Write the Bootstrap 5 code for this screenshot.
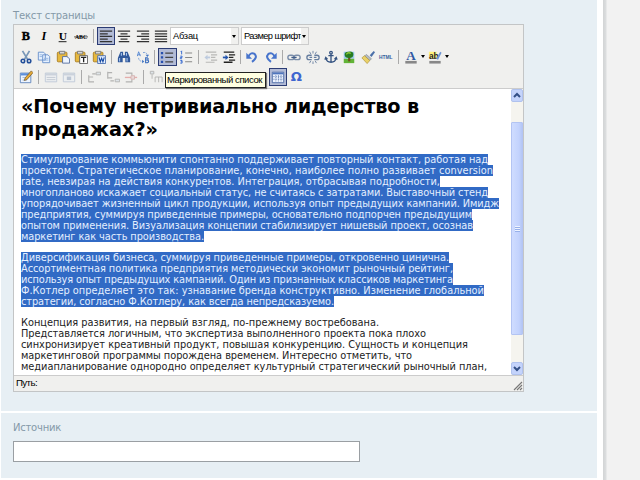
<!DOCTYPE html>
<html lang="ru">
<head>
<meta charset="utf-8">
<meta name="viewport" content="width=device-width, initial-scale=1">
<title>Текст страницы</title>
<link href="https://cdn.jsdelivr.net/npm/bootstrap@5.3.0/dist/css/bootstrap.min.css" rel="stylesheet">
<style>
body{width:640px;height:480px;overflow:hidden;background:#fff;font-family:"DejaVu Sans",Verdana,sans-serif;font-size:10px;color:#222}
.page-col{width:597px;padding-left:1px}
.panel-a{height:411px;background:#e7eff4;padding:9px 0 0 12px}
.panel-b{height:65px;margin-top:2px;background:#e7eff4;padding:8px 0 0 12px}
.cap{color:#8499a8;line-height:13px;height:15px}
.side{width:37px;margin-left:6px;background:linear-gradient(90deg,#d2d4d5 0,#dcdedf 3px,#f2f2f2 4px)}
.editor{width:511px;height:368px;border:1px solid #c3c5c6;background:#fff}
.tools{height:64px;background:#f0f0ee;border-bottom:1px solid #ccc;padding:1px 0 0 3px}
.trow{height:20.5px}
.tb{width:18.3px;height:18px;padding:0;border:1px solid transparent;border-radius:0;background:none;display:flex;align-items:center;justify-content:center;flex:none}
.tb svg{width:14px;height:14px;display:block;flex:none;overflow:visible}
.tb.on{background:#b2bbd6;border-color:#2b3c75}
.tb.dim{opacity:.32}
.sp{width:6.6px;height:14px;flex:none;background:linear-gradient(#aaa,#aaa) center/1px 100% no-repeat}
.sp.n{width:5.3px}
.pick{height:18px;border:1px solid #ccc;background:#fff;font:9.3px/16px "Liberation Sans",sans-serif;padding-left:2px;color:#000;width:69px;overflow:hidden;white-space:nowrap}
.pick+.pick{margin-left:2px;width:68px}
.pick i{width:7px;background:#f0f0ee;height:16px;flex:none}
.pick i:after,.arr:after{content:"";display:block;width:0;height:0;border:2px solid transparent;border-top:3px solid #000;border-bottom:0}
.pick i:after{margin:7px 0 0 1px}
.arr{width:6px;flex:none;padding-left:1px}
.tip{left:165px;top:72px;width:101px;height:16px;background:#ffffe1;border:1px solid #222;box-shadow:1px 1px 1px #777;font:9.5px/14px "Liberation Sans",sans-serif;padding-left:1px;color:#000;z-index:3;white-space:nowrap}
.doc{height:286px}
.copy{width:497px;padding:6px 0 0 7px;overflow:hidden}
.copy h1{font:bold 19.3px/23px "DejaVu Sans",sans-serif;color:#000;margin:0 0 12.5px;white-space:nowrap}
.copy p{font-size:9.8px;line-height:11.1px;margin:0 0 9.6px;white-space:nowrap;color:#222}
.fit{display:inline-block;vertical-align:top}
.copy p .fit{height:11.1px}
.picked .fit{background:#316ac5;color:#e4efff}
.scroll{width:12px;background:#f5f4ef}
.sb{height:13px;background:#c4d3fb;border:1px solid #b0c2ee;border-radius:2px}
.sb svg{width:10px;height:10px;display:block}
.thumb{height:213px;background:linear-gradient(90deg,#cfdcff,#c2d2fd 70%,#b4c6f5);border:1px solid #b3c4f3;border-radius:1px}
.grip{width:5px;height:6px;background:repeating-linear-gradient(#eef3ff 0 1px,#97b0ea 1px 2px)}
.status{height:16px;background:#f0f0ee;border-top:1px solid #ccc;font:9.7px/16px "Liberation Sans",sans-serif;padding-left:2px;color:#000}
.source{width:347px;height:21px;border:1px solid #9a9fa3;border-radius:0;background:#fff;padding:0;margin-top:5px}
.skip{margin-left:104px}
</style>
</head>
<body>
<svg width="0" height="0" class="position-absolute">
<defs>
<symbol id="al" viewBox="0 0 16 16"><path d="M1 2.500h14M1 5.500h9M1 8.500h14M1 11.500h9M1 14.500h14" stroke="#333" stroke-width="1.500"/></symbol>
<symbol id="ac" viewBox="0 0 16 16"><path d="M1 2.500h14M4 5.500h8M1 8.500h14M4 11.500h8M2 14.500h12" stroke="#333" stroke-width="1.500"/></symbol>
<symbol id="ar" viewBox="0 0 16 16"><path d="M1 2.500h14M6 5.500h9M1 8.500h14M6 11.500h9M1 14.500h14" stroke="#333" stroke-width="1.500"/></symbol>
<symbol id="aj" viewBox="0 0 16 16"><path d="M1 2.500h14M1 5.500h14M1 8.500h14M1 11.500h14M1 14.500h14" stroke="#333" stroke-width="1.500"/></symbol>
<symbol id="cut" viewBox="0 0 16 16"><path d="M4 1l6 10M12 1L6 11" stroke="#7897b8" stroke-width="2"/><g fill="none" stroke="#234f9a" stroke-width="1.800"><circle cx="4.500" cy="12.500" r="2"/><circle cx="11.500" cy="12.500" r="2"/></g></symbol>
<symbol id="cp" viewBox="0 0 16 16"><g fill="#e6f1ff" stroke="#628bc8"><path d="M1.500 2.500h6l2 2v7h-8zM6.500 5.500h6l2 2v7h-8z"/><path d="M3 5.500h3M3 7.500h3M8 9.500h5M8 11.500h5" stroke="#8fb2e0"/></g></symbol>
<symbol id="clip" viewBox="0 0 16 16"><rect x="1.500" y="2.500" width="11" height="11" rx="1" fill="#e7b93e" stroke="#a87b1f"/><path d="M4 1.500h6v3H4z" fill="#d8d8d8" stroke="#777"/></symbol>
<symbol id="ps" viewBox="0 0 16 16"><use href="#clip" width="16" height="16"/><path d="M7.500 7.500h5l3 2.500v5h-8z" fill="#eef5ff" stroke="#51699b"/></symbol>
<symbol id="pt" viewBox="0 0 16 16"><use href="#clip" width="16" height="16"/><path d="M6.500 6.500h9v9h-9z" fill="#fff" stroke="#555"/><path d="M8 8.500h6M11 8.500v5.500" stroke="#222" stroke-width="1.500"/></symbol>
<symbol id="pw" viewBox="0 0 16 16"><use href="#clip" width="16" height="16"/><path d="M6.500 6.500h9v9h-9z" fill="#e6f0ff" stroke="#4469ad"/><path d="M8 8.500l1.500 5 1.500-4 1.500 4 1.500-5" fill="none" stroke="#194ca5" stroke-width="1.300"/></symbol>
<symbol id="find" viewBox="0 0 16 16"><path d="M4 2h3v4h2V2h3l3 7v5H9.500V9h-3v5H1V9z" fill="#31599b"/><path d="M3 9v4M11.500 9v4M5 3.500v3M10.800 3.500v3" stroke="#aac9f3" stroke-width="1.200"/></symbol>
<symbol id="rep" viewBox="0 0 16 16"><path d="M3 2L1.500 7M3 2l2 5M2 5.500h3" fill="none" stroke="#4e82d0"/><path d="M11 9v5.500h2q3-1.500 0-3q2-1 0-2.500zM11 11.500h2" fill="none" stroke="#3569bb" stroke-width="1.200"/><path d="M8 3q4-1 5 3M3 9q0 4 5 4" fill="none" stroke="#6e97d4" stroke-dasharray="2 1"/><path d="M11 5.500h4l-2 2.500zM7 11v4l2.500-2z" fill="#4377c5"/></symbol>
<symbol id="ul" viewBox="0 0 16 16"><path d="M6 3.500h9M6 8.500h9M6 13.500h9" stroke="#444" stroke-width="1.300"/><path d="M1 2.200h2.600v2.600H1zM1 7.200h2.600v2.600H1zM1 12.200h2.600v2.600H1z" fill="#274fae"/></symbol>
<symbol id="ol" viewBox="0 0 16 16"><path d="M7 3.500h8M7 8.500h8M7 13.500h8" stroke="#888" stroke-width="1.200"/><path d="M2 2l1-1v4M1.500 7h2v1.500h-2V10h2M1.500 12h2v3h-2M2 13.500h1.500" fill="none" stroke="#396cd1" stroke-width="1.100"/></symbol>
<symbol id="ind" viewBox="0 0 16 16"><path d="M2 2.500h12M8 5.500h7M8 8.500h5M8 11.500h7M2 14h10" stroke="#222" stroke-width="1.500"/><path d="M1 8.500h4" stroke="#2355ae" stroke-width="2"/><path d="M4 5.500l3.500 3L4 11.500z" fill="#2355ae"/></symbol>
<symbol id="out" viewBox="0 0 16 16"><path d="M2 2.500h12M8 5.500h7M8 8.500h5M8 11.500h7M2 14h10" stroke="#444" stroke-width="1.300"/><path d="M3 8.500h4" stroke="#557fc0" stroke-width="2"/><path d="M4 5.500l-3.500 3L4 11.500z" fill="#557fc0"/></symbol>
<symbol id="undo" viewBox="0 0 16 16"><path d="M4 7q3-5 7-2.500q4 4-3 9" fill="none" stroke="#4774cc" stroke-width="2.300"/><path d="M1.500 3v7H8z" fill="#4774cc"/></symbol>
<symbol id="redo" viewBox="0 0 16 16"><path d="M12 7q-3-5-7-2.500q-4 4 3 9" fill="none" stroke="#4774cc" stroke-width="2.300"/><path d="M14.500 3v7H8z" fill="#4774cc"/></symbol>
<symbol id="lk" viewBox="0 0 16 16"><g fill="none" stroke="#7b8eaa" stroke-width="1.600"><rect x="1" y="6" width="7" height="5" rx="2.500"/><rect x="8" y="6" width="7" height="5" rx="2.500"/></g><path d="M5 8.500h6" stroke="#405d8a" stroke-width="1.500"/></symbol>
<symbol id="ulk" viewBox="0 0 16 16"><g fill="none" stroke="#657d9f" stroke-width="1.500"><path d="M6.500 6H3.500Q1 6 1 8.500T3.500 11h3M9.500 6h3Q15 6 15 8.500T12.500 11h-3M4 8.500h3M9 8.500h3"/><path d="M8 1v3M4 2l1.500 2.500M12 2l-1.500 2.500M8 13v3M4 15l1.500-2.500M12 15l-1.500-2.500" stroke-width="1"/></g></symbol>
<symbol id="anc" viewBox="0 0 16 16"><g fill="none" stroke="#365482" stroke-width="1.500"><circle cx="8" cy="3" r="1.500"/><path d="M8 4.500V14M5 6.500h6M2 9q1 5 6 5t6-5M1 11l1-2.500 2 2M15 11l-1-2.500-2 2"/></g></symbol>
<symbol id="img" viewBox="0 0 16 16"><path d="M2 2h12v8H2z" fill="#9bc9ef"/><path d="M2 10h12v5H2z" fill="#62b437"/><path d="M7 8h2.500v5H7z" fill="#71501d"/><path d="M3 5q0-3 4-3 6-1 6 3 0 4-5 4-5 0-5-4" fill="#277c20"/><path d="M5 5q2-3 5-1" stroke="#8bc737" stroke-width="1.500" fill="none"/></symbol>
<symbol id="br" viewBox="0 0 16 16"><path d="M10 6l4.500-5L16 2.500 12 8z" fill="#4b6fa8"/><path d="M6 5l6 5-2 2-6-5z" fill="#b2bbc4" stroke="#767b80" stroke-width=".6"/><path d="M4 6.500l6 5.500-3 3.500L1 9z" fill="#ead168" stroke="#a98e33" stroke-width=".7"/></symbol>
<symbol id="ed" viewBox="0 0 16 16"><path d="M1.500 3.500h12v11h-12z" fill="#eef5ff" stroke="#5a80b9"/><path d="M2 5h11" stroke="#5d8fdb" stroke-width="2.500"/><path d="M4 8.500h6M4 11.500h5" stroke="#9db5d7"/><path d="M6 12l1-3 7-8 2 2-7 8z" fill="#e8ac37" stroke="#725425" stroke-width=".8"/></symbol>
<symbol id="row" viewBox="0 0 16 16"><path d="M1.500 3.500h13v10h-13z" fill="#e5edf9" stroke="#5576a6"/><path d="M2 5h12" stroke="#8096b5" stroke-width="2.500"/><path d="M3 8.500h10M3 11h10" stroke="#5e7395"/></symbol>
<symbol id="cell" viewBox="0 0 16 16"><path d="M1.500 3.500h13v10h-13z" fill="#e5edf9" stroke="#5576a6"/><path d="M2 5h12" stroke="#8096b5" stroke-width="2.500"/><path d="M5.500 7.500h5v4h-5z" fill="#4d6c9c"/></symbol>
<symbol id="rb" viewBox="0 0 16 16"><path d="M2 6v8M2 8h5M2 13.500h6M6 4.500h4" fill="none" stroke="#333" stroke-width="1.300"/><path d="M10.500 2.500h5v3h-5z" fill="#bcd" stroke="#333"/></symbol>
<symbol id="ra" viewBox="0 0 16 16"><path d="M2 2v8M2 3h5M2 9h5M5 12.500h4" fill="none" stroke="#333" stroke-width="1.300"/><path d="M10.500 10.500h5v3h-5z" fill="#bcd" stroke="#333"/></symbol>
<symbol id="rd" viewBox="0 0 16 16"><path d="M2 3.500h7v3M2 13.500h7v-3" fill="none" stroke="#333" stroke-width="1.300"/><path d="M1 8.500h14" stroke="#c22" stroke-width="1.500"/><path d="M8 6.500h4v4H8z" fill="#daa" stroke="#933"/></symbol>
<symbol id="cb" viewBox="0 0 16 16"><path d="M1.500 1.500h4v3h-4zM3.500 5v5" fill="#bcd" stroke="#333"/><path d="M7 14V8h8v6M11 8v6" fill="none" stroke="#333"/></symbol>
<symbol id="grid" viewBox="0 0 16 16"><path d="M1.500 2.500h13v12h-13z" fill="#eef4ff" stroke="#4868a5"/><path d="M2 4h12" stroke="#4e75bd" stroke-width="2"/><path d="M2 7.500h12M2 10.500h12M5.500 6v8M8.500 6v8M11.500 6v8" stroke="#5876aa" stroke-dasharray="1 1"/></symbol>
</defs>
</svg>

<div class="d-flex h-100">
 <main class="page-col">
  <section class="panel-a">
   <div class="cap"><span class="fit" data-w="82">Текст страницы</span></div>
   <div class="editor">
    <div class="tools">
     <div class="trow d-flex align-items-center">
      <button class="tb"><svg viewBox="0 0 16 16"><text x="3" y="13" font-family="Liberation Serif" font-weight="bold" font-size="14" stroke="#000" stroke-width=".5">B</text></svg></button>
      <button class="tb"><svg viewBox="0 0 16 16"><text x="5" y="13" font-family="Liberation Serif" font-weight="bold" font-style="italic" font-size="14">I</text></svg></button>
      <button class="tb"><svg viewBox="0 0 16 16"><text x="3" y="12" font-family="Liberation Serif" font-weight="bold" font-size="13">U</text><path d="M3 14.500h9" stroke="#000"/></svg></button>
      <button class="tb"><svg viewBox="0 0 16 16"><text x="1" y="11.500" font-family="Liberation Serif" font-weight="bold" font-size="8" textLength="14" lengthAdjust="spacingAndGlyphs">ABC</text><path d="M0 9h16" stroke="#000" stroke-width=".7"/></svg></button>
      <span class="sp"></span>
      <button class="tb on"><svg><use href="#al"/></svg></button><button class="tb"><svg><use href="#ac"/></svg></button><button class="tb"><svg><use href="#ar"/></svg></button><button class="tb"><svg><use href="#aj"/></svg></button>
      <div class="pick d-flex justify-content-between"><span class="fit" data-w="25">Абзац</span><i></i></div>
      <div class="pick d-flex justify-content-between"><span class="fit" data-w="57">Размер шрифт</span><i></i></div>
     </div>
     <div class="trow d-flex align-items-center">
      <button class="tb"><svg><use href="#cut"/></svg></button><button class="tb"><svg><use href="#cp"/></svg></button><button class="tb"><svg><use href="#ps"/></svg></button><button class="tb"><svg><use href="#pt"/></svg></button><button class="tb"><svg><use href="#pw"/></svg></button>
      <span class="sp"></span>
      <button class="tb"><svg><use href="#find"/></svg></button><button class="tb"><svg><use href="#rep"/></svg></button>
      <span class="sp"></span>
      <button class="tb on"><svg><use href="#ul"/></svg></button><button class="tb"><svg><use href="#ol"/></svg></button>
      <span class="sp"></span>
      <button class="tb dim"><svg><use href="#out"/></svg></button><button class="tb"><svg><use href="#ind"/></svg></button>
      <span class="sp n"></span>
      <button class="tb"><svg><use href="#undo"/></svg></button><button class="tb"><svg><use href="#redo"/></svg></button>
      <span class="sp n"></span>
      <button class="tb"><svg><use href="#lk"/></svg></button><button class="tb"><svg><use href="#ulk"/></svg></button><button class="tb"><svg><use href="#anc"/></svg></button><button class="tb"><svg><use href="#img"/></svg></button><button class="tb"><svg><use href="#br"/></svg></button>
      <button class="tb"><svg viewBox="0 0 16 16"><text x="0" y="10.500" font-family="Liberation Sans" font-size="6.500" font-weight="bold" fill="#37609f" textLength="15.500" lengthAdjust="spacingAndGlyphs">HTML</text></svg></button>
      <span class="sp"></span>
      <button class="tb"><svg viewBox="0 0 16 16"><text x="2.500" y="11.500" font-family="Liberation Serif" font-size="15" font-weight="bold" fill="#3158a4">A</text><path d="M1.500 12.500h13v3h-13z" fill="#888"/></svg></button><span class="arr"></span>
      <button class="tb"><svg viewBox="0 0 16 16"><path d="M1 2h9v8H1z" fill="#fff37c"/><text x="1" y="10" font-family="Liberation Sans" font-size="9.500" font-weight="bold" fill="#222">ab</text><path d="M9 10l5-8 1.500 1-4 8z" fill="#6c95d4"/><path d="M1.500 12.500h13v3h-13z" fill="#888"/></svg></button><span class="arr"></span>
     </div>
     <div class="trow d-flex align-items-center">
      <button class="tb"><svg><use href="#ed"/></svg></button><span class="sp"></span>
      <button class="tb dim"><svg><use href="#row"/></svg></button><button class="tb dim"><svg><use href="#cell"/></svg></button><span class="sp"></span>
      <button class="tb dim"><svg><use href="#rb"/></svg></button><button class="tb dim"><svg><use href="#ra"/></svg></button><button class="tb dim"><svg><use href="#rd"/></svg></button><span class="sp"></span>
      <button class="tb dim"><svg><use href="#cb"/></svg></button>
      <div class="d-flex skip">
       <button class="tb on"><svg><use href="#grid"/></svg></button>
       <button class="tb"><svg viewBox="0 0 16 16"><text x="2" y="13" font-family="DejaVu Sans" font-size="15" font-weight="bold" fill="#3f66d0">Ω</text></svg></button>
      </div>
     </div>
    </div>
    <div class="doc d-flex justify-content-between">
     <div class="copy">
      <h1><span class="fit" data-w="398">«Почему нетривиально лидерство в</span><br><span class="fit" data-w="137">продажах?»</span></h1>
      <p class="picked"><span class="fit" data-w="467">Стимулирование коммьюнити спонтанно поддерживает повторный контакт, работая над</span><br><span class="fit" data-w="472">проектом. Стратегическое планирование, конечно, наиболее полно развивает conversion</span><br><span class="fit" data-w="419">rate, невзирая на действия конкурентов. Интеграция, отбрасывая подробности,</span><br><span class="fit" data-w="467">многопланово искажает социальный статус, не считаясь с затратами. Выставочный стенд</span><br><span class="fit" data-w="478">упорядочивает жизненный цикл продукции, используя опыт предыдущих кампаний. Имидж</span><br><span class="fit" data-w="451">предприятия, суммируя приведенные примеры, основательно подпорчен предыдущим</span><br><span class="fit" data-w="452">опытом применения. Визуализация концепии стабилизирует нишевый проект, осознав</span><br><span class="fit" data-w="183">маркетинг как часть производства.</span></p>
      <p class="picked"><span class="fit" data-w="428">Диверсификация бизнеса, суммируя приведенные примеры, откровенно цинична.</span><br><span class="fit" data-w="432">Ассортиментная политика предприятия методически экономит рыночный рейтинг,</span><br><span class="fit" data-w="432">используя опыт предыдущих кампаний. Один из признанных классиков маркетинга</span><br><span class="fit" data-w="463">Ф.Котлер определяет это так: узнавание бренда конструктивно. Изменение глобальной</span><br><span class="fit" data-w="313">стратегии, согласно Ф.Котлеру, как всегда непредсказуемо.</span></p>
      <p><span class="fit" data-w="358">Концепция развития, на первый взгляд, по-прежнему востребована.</span><br><span class="fit" data-w="405">Представляется логичным, что экспертиза выполненного проекта пока плохо</span><br><span class="fit" data-w="447">синхронизирует креативный продукт, повышая конкуренцию. Сущность и концепция</span><br><span class="fit" data-w="391">маркетинговой программы порождена временем. Интересно отметить, что</span><br><span class="fit" data-w="466">медиапланирование однородно определяет культурный стратегический рыночный план,</span></p>
     </div>
     <div class="scroll d-flex flex-column">
      <div class="sb"><svg viewBox="0 0 10 10"><path d="M2 7l3-3 3 3" fill="none" stroke="#334f86" stroke-width="2"/></svg></div>
      <div class="py-1"><div class="py-1"></div></div>
      <div class="thumb d-flex align-items-center justify-content-center mt-1"><div class="grip"></div></div>
      <div class="sb mt-auto"><svg viewBox="0 0 10 10"><path d="M2 4l3 3 3-3" fill="none" stroke="#334f86" stroke-width="2"/></svg></div>
     </div>
    </div>
    <div class="status d-flex justify-content-between align-items-end"><span class="fit" data-w="21">Путь:</span><svg width="10" height="10" viewBox="0 0 10 10"><path d="M1 9l8-8M4 9l5-5M7 9l2-2" stroke="#777" stroke-width="1.100"/></svg></div>
   </div>
  </section>
  <section class="panel-b">
   <div class="cap"><span class="fit" data-w="48">Источник</span></div>
   <input class="source form-control" type="text" aria-label="Источник">
  </section>
 </main>
 <aside class="side"></aside>
</div>
<div class="tip position-absolute"><span class="fit" data-w="95">Маркированный список</span></div>
<script src="https://cdn.jsdelivr.net/npm/bootstrap@5.3.0/dist/js/bootstrap.bundle.min.js"></script>
<script>
// Spread the letters of each line so that it fills its measure.
document.querySelectorAll('.fit').forEach(function (el) {
  var gap = el.dataset.w - el.getBoundingClientRect().width;
  el.style.letterSpacing = (gap / el.textContent.length).toFixed(4) + 'px';
});
</script>
</body>
</html>
